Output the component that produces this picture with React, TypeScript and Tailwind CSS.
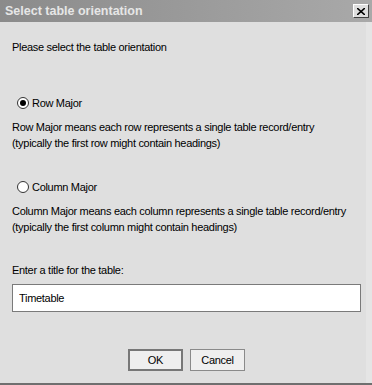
import React, { useState } from 'react';

export default function App() {
  const [mode, setMode] = useState<'row' | 'column'>('row');
  const [title, setTitle] = useState('Timetable');

  return (
    <div
      className="w-[372px] h-[385px] bg-[#dfdfdf] flex flex-col text-[11px] tracking-[-0.3px] text-black border-b-2 border-[#6f6f6f] whitespace-nowrap"
      style={{ fontFamily: '"Liberation Sans", Arial, sans-serif' }}
    >
      <div className="h-[22px] flex items-center justify-between pl-[5px] pr-[3px] bg-gradient-to-r from-[#8b8b8b] to-[#a9a9a9]">
        <span className="text-[12.5px] font-bold text-[#e6e6e6] tracking-[0px]">Select table orientation</span>
        <button className="w-[16px] h-[14px] bg-[#dedede] border border-t-white border-l-white border-r-[#404040] border-b-[#404040] flex items-center justify-center">
          <svg width="8" height="7" viewBox="0 0 8 7">
            <path d="M0 0 L8 7 M8 0 L0 7" stroke="#000" strokeWidth="1.6" />
          </svg>
        </button>
      </div>

      <div className="flex-1 flex flex-col pl-[12px] pr-[5px] border-r-[6px] border-[#e5e5e5]">
        <p className="mt-[17px] leading-[16px]">Please select the table orientation</p>

        <label className="mt-[40px] flex items-center gap-[3px] pl-[5px] leading-[16px] cursor-pointer">
          <Radio checked={mode === 'row'} onClick={() => setMode('row')} />
          <span>Row Major</span>
        </label>
        <p className="mt-[8px] leading-[16px]">
          Row Major means each row represents a single table record/entry
          <br />
          (typically the first row might contain headings)
        </p>

        <label className="mt-[28px] flex items-center gap-[3px] pl-[5px] leading-[16px] cursor-pointer">
          <Radio checked={mode === 'column'} onClick={() => setMode('column')} />
          <span>Column Major</span>
        </label>
        <p className="mt-[8px] leading-[16px]">
          Column Major means each column represents a single table record/entry
          <br />
          (typically the first column might contain headings)
        </p>

        <p className="mt-[27px] leading-[16px]">Enter a title for the table:</p>
        <input
          value={title}
          onChange={(e) => setTitle(e.target.value)}
          className="mt-[6px] h-[28px] w-full bg-white border border-[#7a7a7a] px-[6px] outline-none tracking-[-0.3px]"
        />

        <div className="mt-[37px] flex justify-center gap-[7px]">
          <button className="w-[55px] h-[22px] bg-[#efefef] border-2 border-[#777777]">OK</button>
          <button className="w-[55px] h-[22px] bg-[#efefef] border border-[#8a8a8a]">Cancel</button>
        </div>
      </div>
    </div>
  );
}

function Radio({ checked, onClick }: { checked: boolean; onClick: () => void }) {
  return (
    <span
      onClick={onClick}
      className="w-[12px] h-[12px] rounded-full border border-[#333] bg-white flex items-center justify-center"
    >
      {checked && <span className="w-[6px] h-[6px] rounded-full bg-black" />}
    </span>
  );
}
